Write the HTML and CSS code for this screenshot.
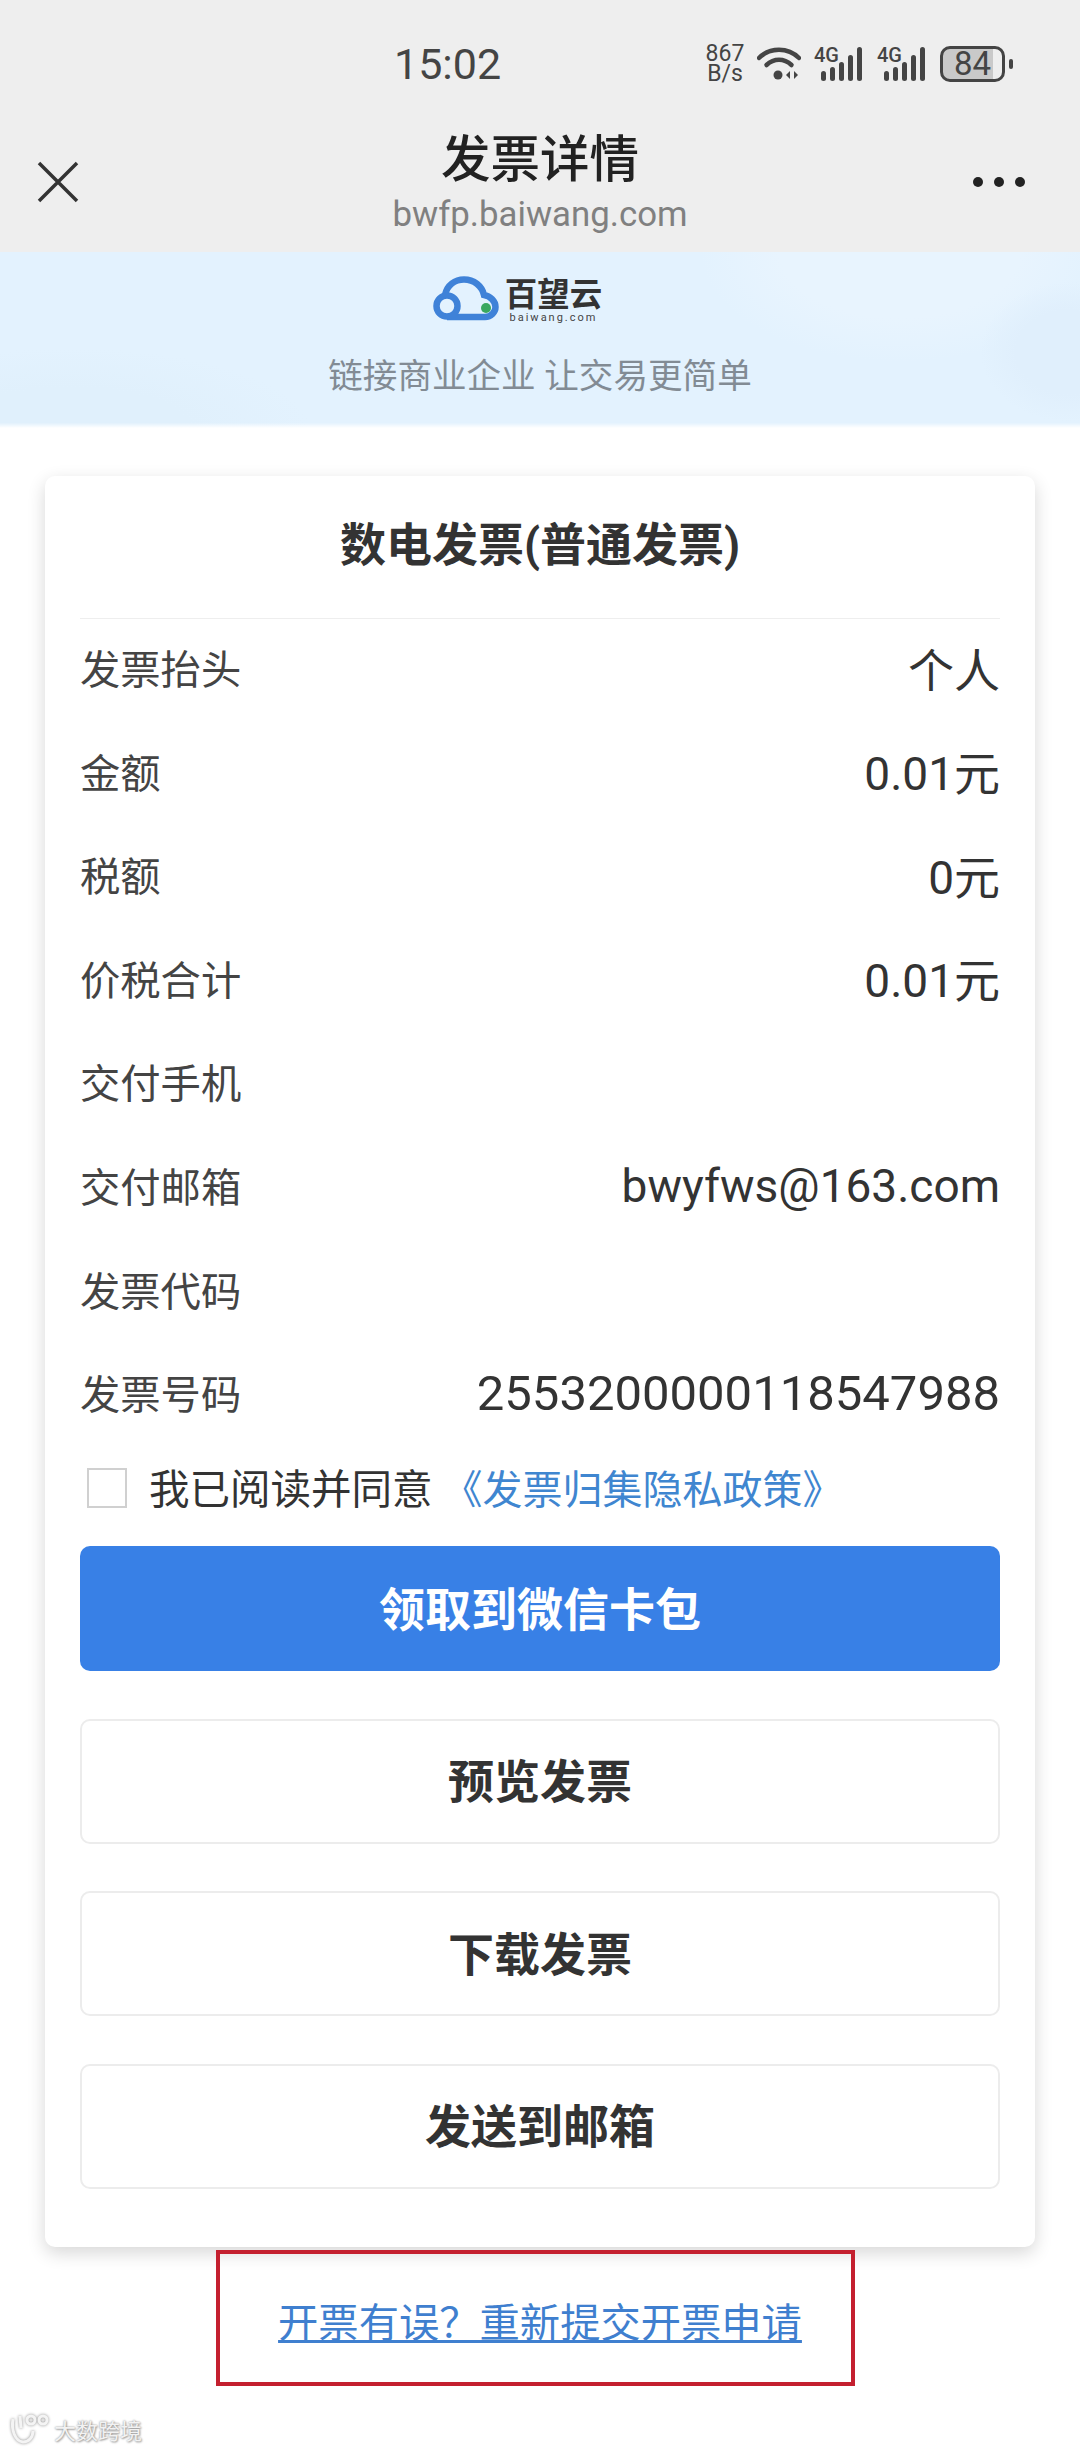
FILE: index.html
```html
<!DOCTYPE html>
<html lang="zh-CN">
<head>
    <meta charset="UTF-8">
    <meta name="viewport" content="width=device-width, initial-scale=1.0">
    <title>发票详情</title>
    <link rel="stylesheet" href="styles.css">
</head>
<body>
    <header class="top">
        <div class="status">
            <span class="time">15:02</span>
            <div class="status-icons">
                <div class="speed"><span>867</span><span>B/s</span></div>
                <svg class="wifi" width="44" height="36" viewBox="0 0 44 36">
                    <path d="M2 12C13 1 31 1 42 12" fill="none" stroke="#444" stroke-width="4.5" stroke-linecap="round"/>
                    <path d="M9.500 19C17 12 27 12 34.500 19" fill="none" stroke="#444" stroke-width="4.500" stroke-linecap="round"/>
                    <circle cx="21" cy="29" r="4.500" fill="#444"/>
                    <path d="M33 25v8l-4-4zM37 25v8l4-4z" fill="#444"/>
                </svg>
                <div class="signal">
                    <span class="net">4G</span>
                    <svg width="50" height="36" viewBox="0 0 50 36">
                        <g fill="#444">
                            <rect x="7" y="25" width="5" height="10" rx="2.500"/>
                            <rect x="16" y="21" width="5" height="14" rx="2.500"/>
                            <rect x="25" y="16" width="5" height="19" rx="2.500"/>
                            <rect x="34" y="9" width="5" height="26" rx="2.500"/>
                            <rect x="43" y="1" width="5" height="34" rx="2.500"/>
                        </g>
                    </svg>
                </div>
                <div class="signal">
                    <span class="net">4G</span>
                    <svg width="50" height="36" viewBox="0 0 50 36">
                        <g fill="#444">
                            <rect x="7" y="25" width="5" height="10" rx="2.500"/>
                            <rect x="16" y="21" width="5" height="14" rx="2.500"/>
                            <rect x="25" y="16" width="5" height="19" rx="2.500"/>
                            <rect x="34" y="9" width="5" height="26" rx="2.500"/>
                            <rect x="43" y="1" width="5" height="34" rx="2.500"/>
                        </g>
                    </svg>
                </div>
                <div class="battery"><span>84</span></div>
                <i class="battery-nub"></i>
            </div>
        </div>
        <div class="nav">
            <svg class="close" width="42" height="42" viewBox="0 0 42 42">
                <path d="M2 2L40 40M40 2L2 40" stroke="#333" stroke-width="3.500" fill="none"/>
            </svg>
            <div class="nav-title">
                <div class="title">发票详情</div>
                <div class="url">bwfp.baiwang.com</div>
            </div>
            <div class="dots"><i></i><i></i><i></i></div>
        </div>
    </header>

    <section class="band">
        <div class="logo">
            <svg width="66" height="46" viewBox="0 0 66 46">
                <path d="M14 41H52C58 41 62.500 36 62.500 31C62.500 25 57 20 51 19C49 10 41 3.500 31 3.500C22 3.500 14 9 12 19" fill="none" stroke="#3f82d8" stroke-width="6.500"/>
                <circle cx="14" cy="30" r="10.500" fill="none" stroke="#3f82d8" stroke-width="6.500"/>
                <circle cx="53" cy="32" r="5" fill="#3aa860"/>
            </svg>
            <div class="logo-text">
                <span class="logo-cn">百望云</span>
                <span class="logo-en">baiwang.com</span>
            </div>
        </div>
        <p class="slogan">链接商业企业 让交易更简单</p>
    </section>

    <main class="card">
        <h2 class="card-title">数电发票(普通发票)</h2>
        <div class="rows">
            <div class="row"><span class="label">发票抬头</span><span class="value">个人</span></div>
            <div class="row"><span class="label">金额</span><span class="value">0.01元</span></div>
            <div class="row"><span class="label">税额</span><span class="value">0元</span></div>
            <div class="row"><span class="label">价税合计</span><span class="value">0.01元</span></div>
            <div class="row"><span class="label">交付手机</span><span class="value"></span></div>
            <div class="row"><span class="label">交付邮箱</span><span class="value value-mail">bwyfws@163.com</span></div>
            <div class="row"><span class="label">发票代码</span><span class="value"></span></div>
            <div class="row"><span class="label">发票号码</span><span class="value value-long">2553200000118547988</span></div>
        </div>
        <div class="agree">
            <span class="check"></span>
            <span class="agree-text">我已阅读并同意</span>
            <a class="policy">《发票归集隐私政策》</a>
        </div>
        <div class="actions">
            <button class="btn btn-primary">领取到微信卡包</button>
            <button class="btn">预览发票</button>
            <button class="btn">下载发票</button>
            <button class="btn">发送到邮箱</button>
        </div>
    </main>

    <div class="mark">
        <a class="retry">开票有误？重新提交开票申请</a>
    </div>

    <div class="watermark">
        <svg width="46" height="32" viewBox="0 0 46 32">
            <g fill="none" stroke="#f4f4f4" stroke-width="3">
                <path d="M5 6C3 17 7 28 15 29C21 29 25 24 25 18"/>
                <path d="M12 3L13 15"/>
                <circle cx="23" cy="7" r="4"/>
                <circle cx="35" cy="7" r="4"/>
            </g>
        </svg>
        <span>大数跨境</span>
    </div>
</body>
</html>
```

FILE: styles.css
```css
* {
    box-sizing: border-box;
}
body {
    margin: 0;
    position: relative;
    height: 2450px;
    overflow: hidden;
    background: #fff;
    font-family: Roboto, "Noto Sans CJK SC", sans-serif;
    color: #333;
}

/* browser chrome */
.top {
    height: 252px;
    background: #eeeeee;
}
.status {
    display: flex;
    align-items: center;
    height: 128px;
    padding: 0 67px 0 394px;
}
.time {
    font-size: 43px;
    color: #444;
}
.status-icons {
    display: flex;
    align-items: center;
    margin-left: auto;
}
.speed {
    display: flex;
    flex-direction: column;
    align-items: center;
    width: 38px;
    font-size: 23px;
    line-height: 20px;
    color: #444;
}
.wifi {
    margin-left: 13px;
}
.signal {
    position: relative;
    width: 50px;
    height: 36px;
    margin-left: 13px;
}
.signal svg {
    display: block;
}
.net {
    position: absolute;
    left: 0;
    top: -3px;
    font-size: 20px;
    font-weight: 500;
    color: #444;
}
.battery {
    width: 65px;
    height: 36px;
    margin-left: 13px;
    border: 3px solid #444;
    border-radius: 10px;
    background: linear-gradient(90deg, #c9c9c9 0 85%, #eee 85%);
    font-size: 33px;
    line-height: 30px;
    text-align: center;
    color: #444;
}
.battery-nub {
    width: 4px;
    height: 10px;
    margin-left: 4px;
    border-radius: 2px;
    background: #444;
}
.nav {
    display: grid;
    grid-template-columns: 130px 1fr 130px;
    align-items: center;
}
.close {
    margin-left: 37px;
}
.nav-title {
    text-align: center;
}
.title {
    font-size: 49.500px;
    line-height: 64px;
    font-weight: 500;
    color: #222;
}
.url {
    font-size: 34.800px;
    line-height: 44px;
    color: #808080;
}
.dots {
    display: flex;
    gap: 11px;
    justify-content: flex-end;
    padding-right: 55px;
}
.dots i {
    width: 10px;
    height: 10px;
    border-radius: 50%;
    background: #222;
}

/* blue band under the chrome */
.band {
    height: 176px;
    padding-top: 24px;
    background:
        linear-gradient(180deg, rgba(255, 255, 255, 0) 97%, #fff 100%),
        radial-gradient(ellipse 90px 70px at 1070px 100px, #e0effc 60%, rgba(224, 239, 252, 0) 100%),
        radial-gradient(ellipse 200px 110px at 900px 0, #e8f4fe 60%, rgba(232, 244, 254, 0) 100%),
        radial-gradient(ellipse 240px 80px at 70px 176px, #e0f0fc 50%, rgba(224, 240, 252, 0) 100%),
        #e3f2fe;
}
.logo {
    display: flex;
    justify-content: center;
    gap: 6px;
    height: 46px;
    padding-right: 45px;
}
.logo-text {
    display: flex;
    flex-direction: column;
    align-items: center;
    padding-top: 1px;
}
.logo-cn {
    font-size: 32.500px;
    line-height: 36px;
    font-weight: 700;
    color: #333;
}
.logo-en {
    font-size: 11px;
    line-height: 10px;
    letter-spacing: 2px;
    color: #444;
}
.slogan {
    margin: 0;
    padding-top: 29px;
    font-size: 34.600px;
    line-height: 50px;
    text-align: center;
    color: #828b94;
}

/* invoice card */
.card {
    width: 990px;
    height: 1771px;
    margin: 48px 0 0 45px;
    padding: 0 35px;
    border-radius: 10px;
    background: #fff;
    box-shadow: 0 6px 18px rgba(0, 0, 0, 0.16);
}
.card-title {
    height: 143px;
    margin: 0;
    border-bottom: 1px solid #eee;
    font-size: 46px;
    line-height: 138px;
    font-weight: 700;
    text-align: center;
    color: #333;
}
.rows {
    display: flex;
    flex-direction: column;
    gap: 51.600px;
    padding-top: 21.500px;
}
.row {
    display: flex;
    align-items: center;
    justify-content: space-between;
    height: 52px;
}
.label {
    font-size: 40.300px;
    color: #444;
}
.value {
    font-size: 46px;
    color: #333;
}
.value-mail {
    padding-top: 4px;
}
.value-long {
    padding-top: 4px;
    font-size: 49px;
}
.agree {
    display: flex;
    align-items: center;
    height: 40px;
    margin-top: 50.500px;
    padding-left: 7px;
}
.check {
    width: 40px;
    height: 40px;
    border: 2px solid #d0d0d0;
    background: #fff;
}
.agree-text {
    margin: 0 0 3px 22px;
    font-size: 40.500px;
    color: #333;
}
.policy {
    margin: 0 0 3px 10px;
    font-size: 40px;
    color: #3f86d0;
}
.actions {
    display: flex;
    flex-direction: column;
    gap: 47.500px;
    margin-top: 38px;
}
.btn {
    height: 125px;
    padding-bottom: 7px;
    border: 2px solid #ececec;
    border-radius: 10px;
    background: #fff;
    font-family: inherit;
    font-size: 46px;
    font-weight: 700;
    color: #333;
}
.btn-primary {
    border: none;
    background: #3880e6;
    color: #fff;
}

/* red box drawn over the screenshot */
.mark {
    display: flex;
    align-items: center;
    justify-content: center;
    width: 639px;
    height: 136px;
    margin: 3px 0 0 216px;
    padding: 12px 0 0 9px;
    border: 4px solid #c4202f;
}
.retry {
    font-size: 40.300px;
    line-height: 46px;
    color: #3f7fcf;
    text-decoration: underline;
    text-decoration-thickness: 3px;
    text-underline-offset: 3px;
}
.watermark {
    position: absolute;
    left: 8px;
    bottom: 5px;
    display: flex;
    align-items: center;
    font-size: 22px;
    color: #f2f2f2;
    text-shadow: 0 0 2px #8c8c8c, 1px 1px 2px #aaa;
}
.watermark svg {
    filter: drop-shadow(0 0 1.500px #8c8c8c);
}
```
